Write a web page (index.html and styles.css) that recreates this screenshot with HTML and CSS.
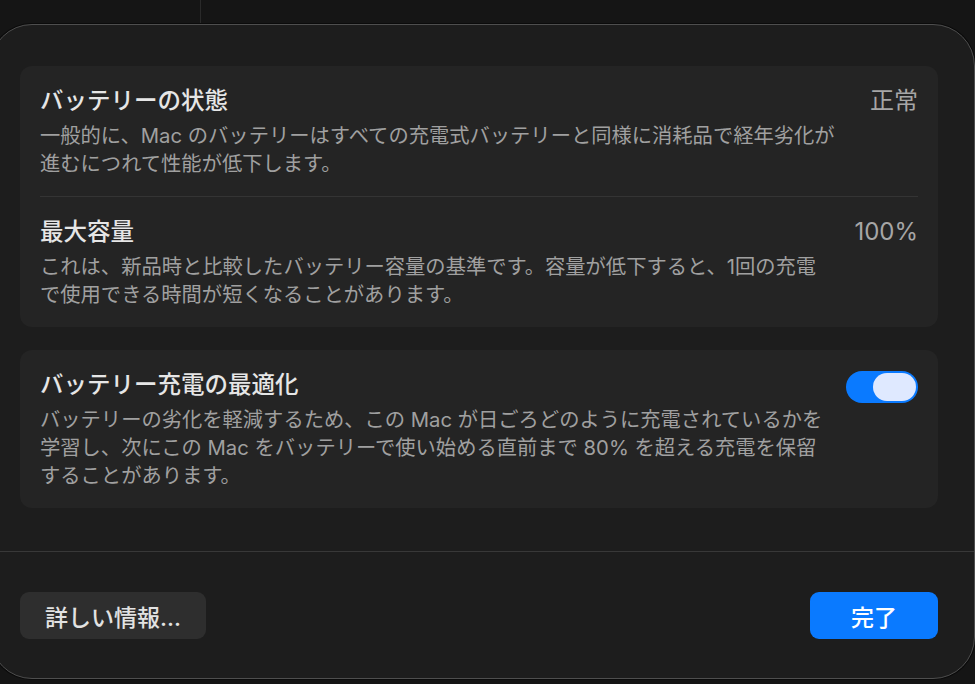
FILE: index.html
```html
<!DOCTYPE html>
<html lang="ja">
<head>
    <meta charset="UTF-8">
    <title>バッテリーの状態</title>
    <link rel="stylesheet" href="styles.css">
</head>
<body>
    <div class="sheet">
        <div class="sheet-body">
            <div class="card">
                <div class="row">
                    <div class="text">
                        <div class="title">バッテリーの状態</div>
                        <div class="desc">一般的に、Mac のバッテリーはすべての充電式バッテリーと同様に消耗品で経年劣化が<br>進むにつれて性能が低下します。</div>
                    </div>
                    <div class="value">正常</div>
                </div>
                <div class="row">
                    <div class="text">
                        <div class="title">最大容量</div>
                        <div class="desc">これは、新品時と比較したバッテリー容量の基準です。容量が低下すると、1回の充電<br>で使用できる時間が短くなることがあります。</div>
                    </div>
                    <div class="value">100%</div>
                </div>
            </div>
            <div class="card">
                <div class="row">
                    <div class="text">
                        <div class="title">バッテリー充電の最適化</div>
                        <div class="desc">バッテリーの劣化を軽減するため、この Mac が日ごろどのように充電されているかを<br>学習し、次にこの Mac をバッテリーで使い始める直前まで 80% を超える充電を保留<br>することがあります。</div>
                    </div>
                    <div class="toggle on"><span class="knob"></span></div>
                </div>
            </div>
        </div>
        <div class="footer">
            <button class="btn">詳しい情報...</button>
            <button class="btn primary">完了</button>
        </div>
    </div>
</body>
</html>
```

FILE: styles.css
```css
body {
    margin: 0;
    height: 684px;
    overflow: hidden;
    font-family: "Inter", "Noto Sans CJK JP", sans-serif;
    background:
        linear-gradient(to right, transparent 200px, #2a2a2a 200px, #2a2a2a 201px, transparent 201px) no-repeat 0 0 / 100% 24px,
        #151515;
}
.sheet {
    box-sizing: border-box;
    width: 985px;
    height: 655px;
    margin: 24px 0 0 -10px;
    background: #1d1d1d;
    border: 1px solid #4e4e4e;
    border-radius: 42px;
    box-shadow: 0 0 0 1px #0b0b0b;
    display: flex;
    flex-direction: column;
}
.sheet-body {
    padding: 41px 36px 43px 29px;
    display: flex;
    flex-direction: column;
    gap: 23px;
}
.card {
    background: #242424;
    border-radius: 12px;
    padding: 0 20px;
}
.row {
    display: flex;
    justify-content: space-between;
    align-items: flex-start;
    padding: 20px 0 18px;
}
.row + .row {
    border-top: 1px solid #343434;
}
.title {
    font-size: 23.5px;
    line-height: 30px;
    font-weight: 500;
    color: #e6e6e6;
}
.desc {
    margin-top: 6px;
    font-size: 20.3px;
    line-height: 28px;
    color: #a0a0a0;
}
.value {
    font-size: 24px;
    line-height: 30px;
    color: #a6a6a6;
}
.toggle {
    box-sizing: border-box;
    width: 72px;
    height: 32px;
    margin-top: 1px;
    padding: 2px;
    border-radius: 16px;
    background: #3a3a3a;
    display: flex;
}
.toggle.on {
    background: #0a7aff;
    justify-content: flex-end;
}
.knob {
    width: 43px;
    height: 28px;
    border-radius: 14px;
    background: #dfe9ff;
}
.footer {
    border-top: 1px solid #383838;
    padding: 40px 36px 0 29px;
    display: flex;
    justify-content: space-between;
}
.btn {
    height: 47px;
    padding: 0 25px;
    border: none;
    border-radius: 9px;
    background: #2e2e2e;
    color: #e2e2e2;
    font-family: inherit;
    font-size: 23px;
    font-weight: 500;
}
.btn.primary {
    width: 128px;
    background: #0a7aff;
    color: #fff;
}
```
